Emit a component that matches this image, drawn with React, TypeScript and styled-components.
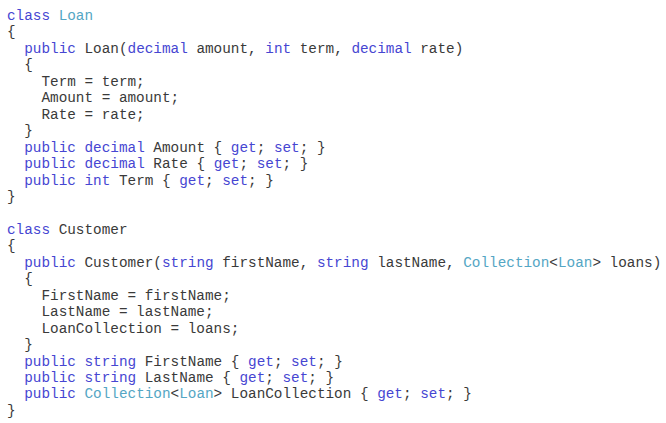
import React from "react";
import styled, { createGlobalStyle } from "styled-components";

const Global = createGlobalStyle`
  html, body { margin: 0; padding: 0; background: #ffffff; }
`;

const Code = styled.pre`
  margin: 0;
  padding: 8px 7px;
  font-family: "Liberation Mono", "Courier New", monospace;
  font-size: 14.35px;
  line-height: 16.46px;
  color: #3a3a3a;
  background: #ffffff;
  white-space: pre;
`;

const Line = styled.div`
  height: 16.46px;
`;

const Kw = styled.span`
  color: #4646d2;
`;

const Ty = styled.span`
  color: #54a6c4;
`;

type Tok = [string, "k" | "t" | "p"];

const k = (s: string): Tok => [s, "k"];
const t = (s: string): Tok => [s, "t"];
const p = (s: string): Tok => [s, "p"];

const lines: Tok[][] = [
  [k("class"), p(" "), t("Loan")],
  [p("{")],
  [p("  "), k("public"), p(" Loan("), k("decimal"), p(" amount, "), k("int"), p(" term, "), k("decimal"), p(" rate)")],
  [p("  {")],
  [p("    Term = term;")],
  [p("    Amount = amount;")],
  [p("    Rate = rate;")],
  [p("  }")],
  [p("  "), k("public"), p(" "), k("decimal"), p(" Amount { "), k("get"), p("; "), k("set"), p("; }")],
  [p("  "), k("public"), p(" "), k("decimal"), p(" Rate { "), k("get"), p("; "), k("set"), p("; }")],
  [p("  "), k("public"), p(" "), k("int"), p(" Term { "), k("get"), p("; "), k("set"), p("; }")],
  [p("}")],
  [],
  [k("class"), p(" Customer")],
  [p("{")],
  [p("  "), k("public"), p(" Customer("), k("string"), p(" firstName, "), k("string"), p(" lastName, "), t("Collection"), p("<"), t("Loan"), p("> loans)")],
  [p("  {")],
  [p("    FirstName = firstName;")],
  [p("    LastName = lastName;")],
  [p("    LoanCollection = loans;")],
  [p("  }")],
  [p("  "), k("public"), p(" "), k("string"), p(" FirstName { "), k("get"), p("; "), k("set"), p("; }")],
  [p("  "), k("public"), p(" "), k("string"), p(" LastName { "), k("get"), p("; "), k("set"), p("; }")],
  [p("  "), k("public"), p(" "), t("Collection"), p("<"), t("Loan"), p("> LoanCollection { "), k("get"), p("; "), k("set"), p("; }")],
  [p("}")],
];

export default function App() {
  return (
    <>
      <Global />
      <Code>
        {lines.map((toks, i) => (
          <Line key={i}>
            {toks.map(([s, kind], j) =>
              kind === "k" ? <Kw key={j}>{s}</Kw> : kind === "t" ? <Ty key={j}>{s}</Ty> : <React.Fragment key={j}>{s}</React.Fragment>
            )}
          </Line>
        ))}
      </Code>
    </>
  );
}
